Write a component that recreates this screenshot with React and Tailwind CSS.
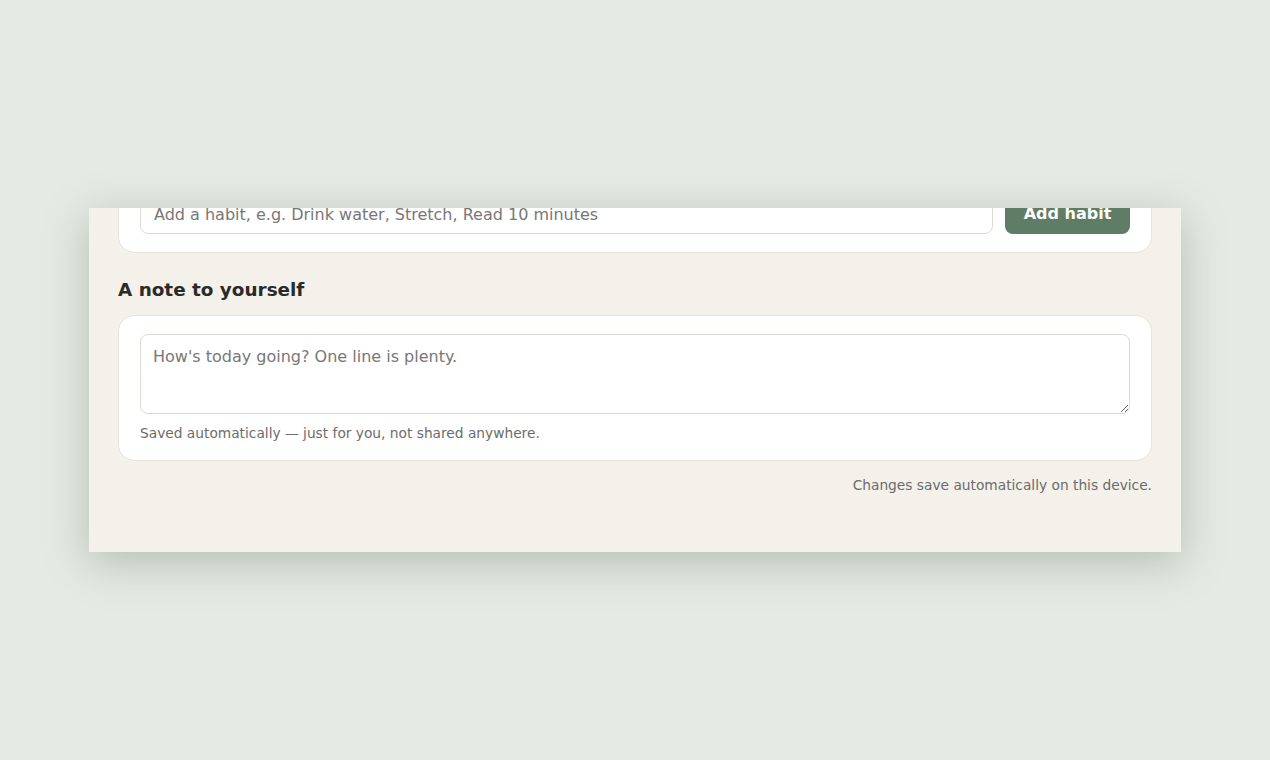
export default function App() {
  const font = { fontFamily: '"DejaVu Sans", sans-serif' };
  return (
    <div className="min-h-[760px] bg-[#e5eae3] pt-[208px] px-[89px]" style={font}>
      <div className="h-[344px] overflow-hidden bg-[#f4f1ea] shadow-[0_10px_40px_rgba(90,110,90,0.35)] flex flex-col justify-end px-[29px] pb-[57px]">
        <div className="shrink-0 bg-white rounded-[16px] border border-[#e7e3da] px-[21px] pt-[21px] pb-[18px] flex gap-[12px]">
          <input className="flex-1 h-[40px] rounded-[8px] border border-[#dedad2] px-[13px] text-[16px] text-[#333] placeholder:text-[#777] outline-none" placeholder="Add a habit, e.g. Drink water, Stretch, Read 10 minutes" />
          <button className="w-[125px] h-[40px] rounded-[8px] bg-[#5f7d64] text-white font-bold text-[16px]">Add habit</button>
        </div>
        <h2 className="shrink-0 mt-[25px] mb-[13px] text-[18.4px] leading-[24px] font-bold text-[#2a2a2a]">A note to yourself</h2>
        <div className="shrink-0 bg-white rounded-[16px] border border-[#e7e3da] px-[21px] pt-[18px] pb-[19px]">
          <textarea className="block w-full h-[80px] rounded-[8px] border border-[#dedad2] px-[12px] py-[10px] text-[16px] text-[#333] placeholder:text-[#777] outline-none resize-y" placeholder="How's today going? One line is plenty." />
          <p className="mt-[11px] text-[13.75px] leading-[16px] text-[#6b6b6b]">Saved automatically — just for you, not shared anywhere.</p>
        </div>
        <p className="shrink-0 mt-[14px] text-right text-[13.75px] leading-[20px] text-[#6b6b6b]">Changes save automatically on this device.</p>
      </div>
    </div>
  );
}
